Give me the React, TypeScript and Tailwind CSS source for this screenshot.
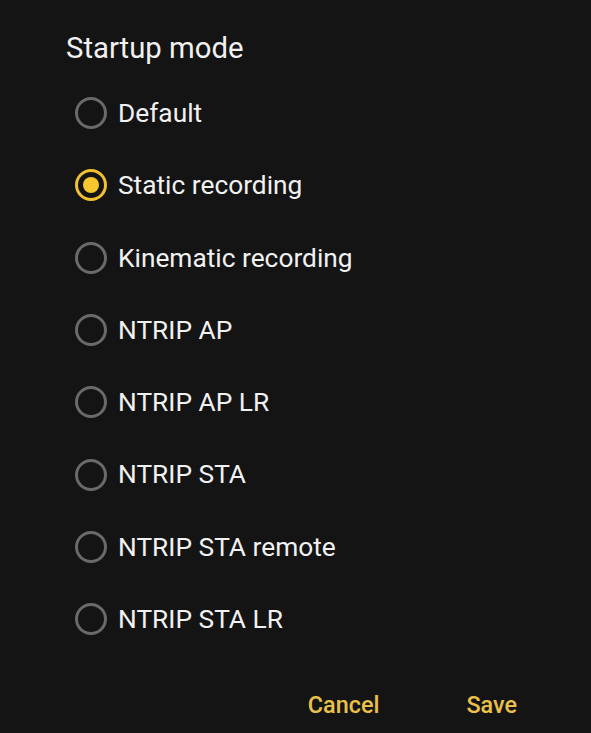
import { useState } from 'react'

const options = [
  'Default',
  'Static recording',
  'Kinematic recording',
  'NTRIP AP',
  'NTRIP AP LR',
  'NTRIP STA',
  'NTRIP STA remote',
  'NTRIP STA LR',
]

function Radio({ checked }: { checked: boolean }) {
  if (checked) {
    return (
      <span className="flex h-[32px] w-[32px] shrink-0 items-center justify-center rounded-full border-[3px] border-[#f0c232]">
        <span className="h-[16px] w-[16px] rounded-full bg-[#f5c72c]" />
      </span>
    )
  }
  return <span className="h-[32px] w-[32px] shrink-0 rounded-full border-[3px] border-[#6a6a6a]" />
}

export default function App() {
  const [selected, setSelected] = useState(1)

  return (
    <div
      className="min-h-[733px] w-full bg-[#141414] px-[66px] text-[#f1f1f1]"
      style={{ fontFamily: 'Roboto, "Noto Sans", sans-serif' }}
    >
      <h2 className="pt-[32px] text-[29.3px] leading-[32px] font-normal">Startup mode</h2>

      <div className="mt-[13px] flex flex-col">
        {options.map((label, i) => (
          <button
            key={label}
            onClick={() => setSelected(i)}
            className="flex h-[72.3px] items-center gap-[11px] pl-[9px] text-left"
          >
            <Radio checked={selected === i} />
            <span className="text-[26.3px] leading-none">{label}</span>
          </button>
        ))}
      </div>

      <div className="mt-[26px] flex h-[48px] items-center justify-end gap-[87px] pr-[8px] text-[23.4px] font-medium text-[#e9c14a]">
        <button>Cancel</button>
        <button>Save</button>
      </div>
    </div>
  )
}
